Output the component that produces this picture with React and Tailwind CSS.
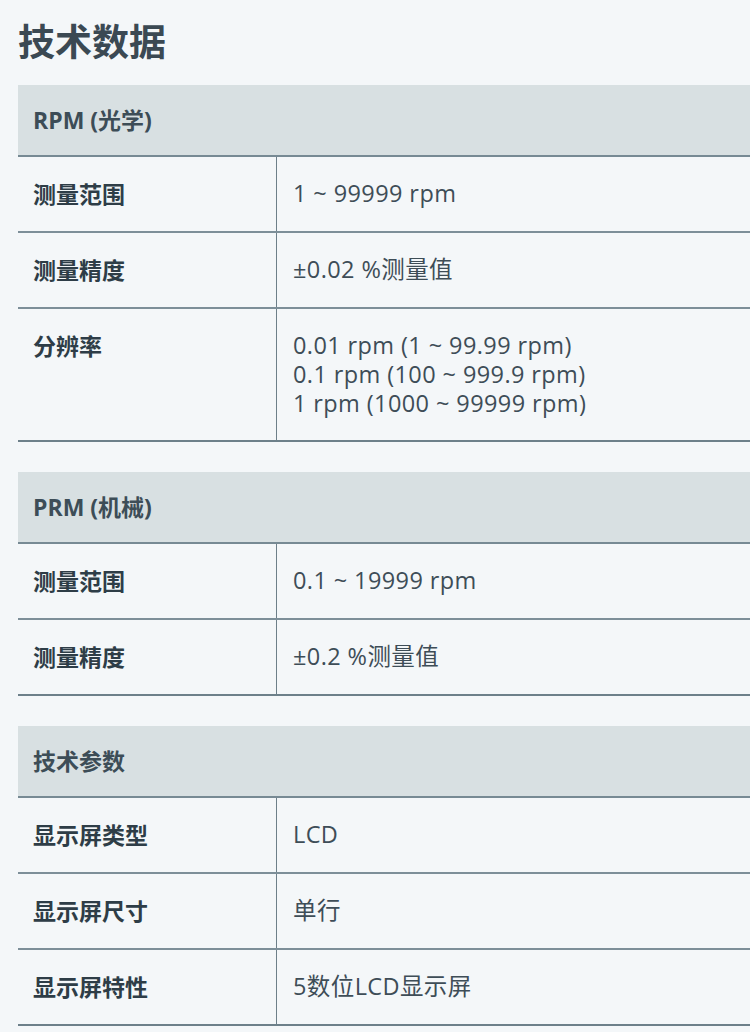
const font = { fontFamily: '"Open Sans", "Noto Sans CJK SC", sans-serif' };

function Section({ title, rows }) {
  return (
    <div className="w-full">
      <div className="bg-[#d8e0e2] px-[15px] h-[72px] flex items-center border-b-2 border-[#778a94]">
        <span className="text-[23px] font-bold text-[#3d4d57]">{title}</span>
      </div>
      {rows.map((r, i) => {
        const multi = r[1].length > 1;
        return (
          <div
            key={i}
            className={`flex border-b-2 ${i === rows.length - 1 ? "border-[#6d808a]" : "border-[#7d8f99]"}`}
          >
            <div className="w-[259px] shrink-0 px-[15px] py-[22px] border-r border-[#6d7f89] text-[23px] leading-[30px] font-bold text-[#2e3d47]">
              {r[0]}
            </div>
            <div
              className={`flex-1 px-[16px] py-[22px] text-[23.5px] tracking-[0.4px] text-[#3e4d57] ${multi ? "leading-[29px]" : "leading-[29.5px]"}`}
            >
              {r[1].map((l, j) => (
                <div key={j}>{l}</div>
              ))}
            </div>
          </div>
        );
      })}
    </div>
  );
}

export default function App() {
  return (
    <div className="w-[750px] h-[1032px] bg-[#f4f7f9] pl-[18px] overflow-hidden" style={font}>
      <h1 className="pt-[16px] h-[85px] text-[37px] leading-[52px] font-bold text-[#3b4953]">技术数据</h1>
      <Section
        title="RPM (光学)"
        rows={[
          ["测量范围", ["1 ~ 99999 rpm"]],
          ["测量精度", ["±0.02 %测量值"]],
          ["分辨率", ["0.01 rpm (1 ~ 99.99 rpm)", "0.1 rpm (100 ~ 999.9 rpm)", "1 rpm (1000 ~ 99999 rpm)"]],
        ]}
      />
      <div className="h-[30px]" />
      <Section
        title="PRM (机械)"
        rows={[
          ["测量范围", ["0.1 ~ 19999 rpm"]],
          ["测量精度", ["±0.2 %测量值"]],
        ]}
      />
      <div className="h-[30px]" />
      <Section
        title="技术参数"
        rows={[
          ["显示屏类型", ["LCD"]],
          ["显示屏尺寸", ["单行"]],
          ["显示屏特性", ["5数位LCD显示屏"]],
        ]}
      />
    </div>
  );
}
